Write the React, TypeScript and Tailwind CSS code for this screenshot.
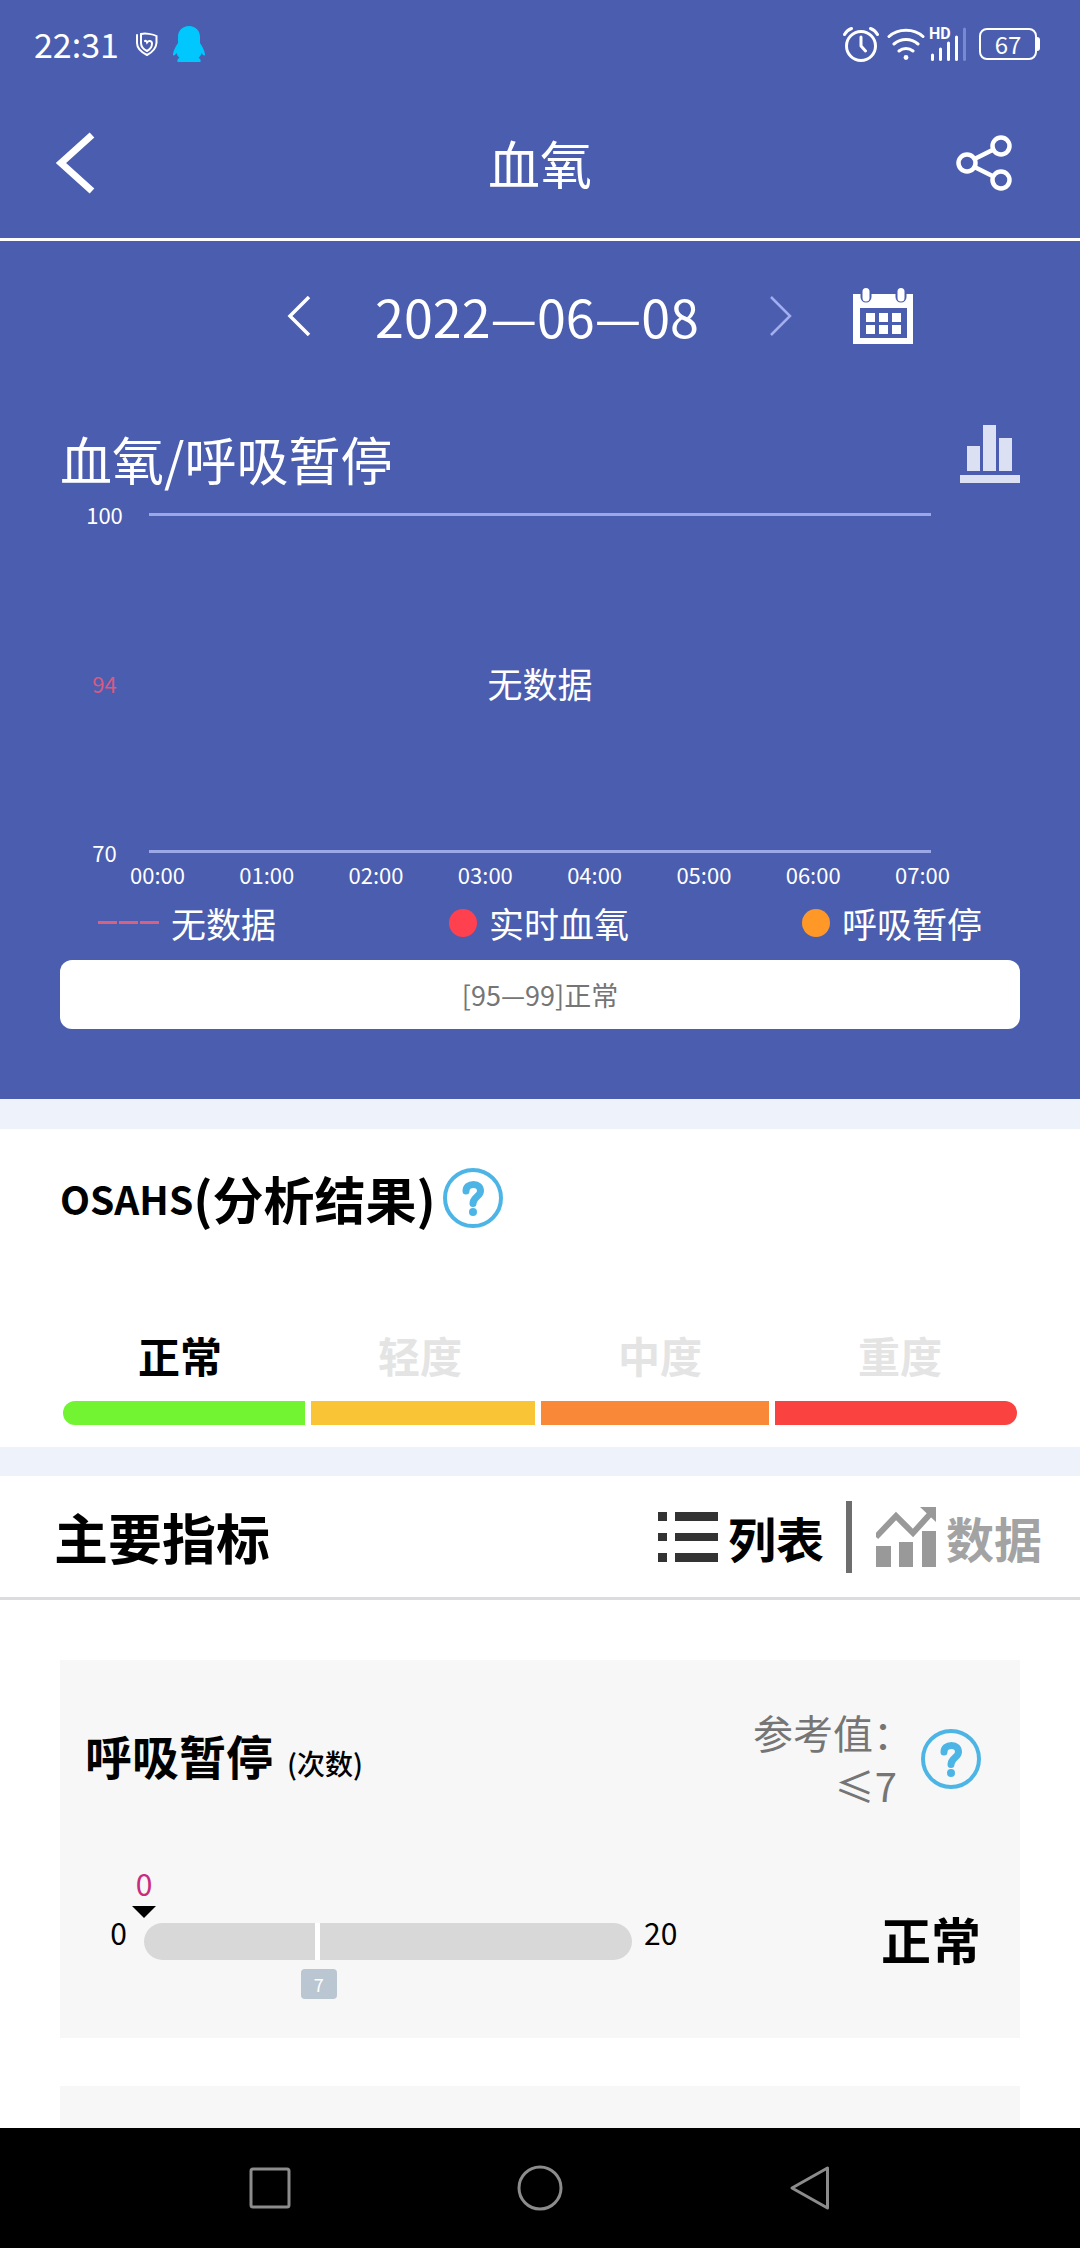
import type { ReactNode } from 'react';

const HOURS = ['00:00', '01:00', '02:00', '03:00', '04:00', '05:00', '06:00', '07:00'];

const LEVELS = [
  { label: '正常', active: true },
  { label: '轻度', active: false },
  { label: '中度', active: false },
  { label: '重度', active: false },
];

const APNEA = { value: 0, min: 0, max: 20, limit: 7 };

function percent(n: number) {
  return `${((n - APNEA.min) / (APNEA.max - APNEA.min)) * 100}%`;
}

function HelpButton({ label }: { label: string }) {
  return (
    <button aria-label={label} className="shrink-0">
      <svg viewBox="0 0 60 60" className="w-[60px] h-[60px]" fill="none" stroke="#4db5e5" strokeLinecap="round">
        <circle cx="30" cy="30" r="28" strokeWidth="4" />
        <path d="M23 23c0-4 3-6.500 7.500-6.500s7 2.500 7 6.500c0 5.500-7.500 6-7.500 12.500" strokeWidth="7" />
        <circle cx="30" cy="44" r="4" fill="#4db5e5" stroke="none" />
      </svg>
    </button>
  );
}

function StatusBar() {
  return (
    <div className="flex items-center justify-between h-[88px] pl-[34px] pr-10">
      <div className="flex items-center">
        <span className="text-[34px] leading-[40px]">22:31</span>
        <svg viewBox="0 0 24 24" className="w-6 h-6 ml-4" fill="none" stroke="white" strokeWidth="2" strokeLinecap="round">
          <path d="M2 3v8c0 5 4 9 10 12 6-3 9-7 9.500-12V4C18 2 10 1 6 2v9c0 4 3 6.500 6 8 3-1.500 5-4 5-7.500 0-3-3.500-3.500-5-1-1-2.500-2-1.500-2-1.500" />
        </svg>
        <svg viewBox="0 0 32 36" className="w-8 h-9 ml-[14px]" fill="#00c8ff">
          <path d="M16 0C9 0 5 5 5 11v6c-2 3-5 8-5 12 1 1.500 2.500-.5 3.500-2 .5 2 1.500 3.500 3 5-1.500.5-2.500 1.500-2 4h23c.5-2.500-.5-3.500-2-4 1.500-1.500 2.500-3 3-5 1 1.500 2.500 3.500 3.500 2 0-4-3-9-5-12v-6c0-6-4-11-11-11z" />
        </svg>
      </div>
      <div className="flex items-center">
        <svg viewBox="0 0 36 36" className="w-9 h-9" fill="none" stroke="white" strokeWidth="3" strokeLinecap="round" strokeLinejoin="round">
          <circle cx="18" cy="20" r="14.500" />
          <path d="M18 11v9l4.500 5M1.500 8.500Q4 4 8.500 2.500M34.500 8.500Q32 4 27.500 2.500" />
        </svg>
        <svg viewBox="0 0 38 36" className="w-[38px] h-9 ml-2" fill="none" stroke="white" strokeWidth="3" strokeLinecap="round">
          <path d="M2 10.500C11 2 27 2 36 10.500M7 18c7-6 17-6 24 0M12 25c4-3.500 10-3.500 14 0" />
          <circle cx="19" cy="31.500" r="2.400" fill="white" stroke="none" />
        </svg>
        <div className="relative ml-1">
          <svg viewBox="0 0 38 36" className="w-[38px] h-9" fill="none" stroke="white" strokeWidth="3" strokeLinecap="round">
            <path d="M3.500 29v4.500M11.500 23v10.500M19.500 17v16.500M27.500 11v22.500" />
            <path d="M35.500 3v30.500" stroke="#7789d3" />
          </svg>
          <span className="absolute left-0 top-0 font-['Roboto',sans-serif] font-bold text-base leading-4">HD</span>
        </div>
        <div className="flex items-center ml-3">
          <div className="flex items-center justify-center w-[58px] h-8 rounded-lg border-2 border-white text-2xl leading-7">
            67
          </div>
          <div className="w-[3px] h-[14px] rounded-r-sm bg-white" />
        </div>
      </div>
    </div>
  );
}

function TopBar() {
  return (
    <header className="flex items-center h-[153px] pl-[54px] pr-[68px] border-b-[3px] border-white">
      <div className="flex-1">
        <button aria-label="返回" className="block">
          <svg viewBox="0 0 42 62" className="w-[42px] h-[62px]" fill="none" stroke="white" strokeWidth="7">
            <path d="M38 3L7 31l31 28" />
          </svg>
        </button>
      </div>
      <h1 className="text-[52px] leading-[60px] pl-[14px]">血氧</h1>
      <div className="flex-1 flex justify-end">
        <button aria-label="分享">
          <svg viewBox="0 0 56 56" className="w-14 h-14" fill="none" stroke="white" strokeWidth="4.500">
            <circle cx="11" cy="28" r="8.500" />
            <circle cx="45" cy="11" r="8.500" />
            <circle cx="45" cy="45" r="8.500" />
            <path d="M18.500 24L37.500 14.500M18.500 32L37.500 41.500" />
          </svg>
        </button>
      </div>
    </header>
  );
}

function DateBar() {
  return (
    <div className="flex items-center h-[150px]">
      <div className="flex-1 flex justify-end pr-16">
        <button aria-label="前一天">
          <svg viewBox="0 0 24 40" className="w-6 h-10" fill="none" stroke="white" strokeWidth="3.500">
            <path d="M22 1L3 20l19 19" />
          </svg>
        </button>
      </div>
      <time dateTime="2022-06-08" className="text-[52px] leading-[52px]">2022—06—08</time>
      <div className="flex-1 flex items-center pl-[70px] gap-[60px]">
        <button aria-label="后一天">
          <svg viewBox="0 0 24 40" className="w-6 h-10" fill="none" stroke="#a3aef0" strokeWidth="2.500">
            <path d="M2 1l19 19L2 39" />
          </svg>
        </button>
        <button aria-label="选择日期">
          <svg viewBox="0 0 60 56" className="w-[60px] h-14">
            <path fill="white" d="M0 6h60v50H0z" />
            <path fill="#4a5dae" d="M7 20h47v30H7z" />
            <path fill="none" stroke="#4a5dae" strokeWidth="11" strokeLinecap="round" d="M13 3v6M48 3v6" />
            <path fill="none" stroke="white" strokeWidth="7" strokeLinecap="round" d="M13 3.500v6.500M48 3.500v6.500" />
            <path fill="white" d="M13 25h9v9h-9zM26 25h9v9h-9zM39 25h9v9h-9zM13 37h9v9h-9zM26 37h9v9h-9zM39 37h9v9h-9z" />
          </svg>
        </button>
      </div>
    </div>
  );
}

function LegendItem({ mark, label }: { mark: ReactNode; label: string }) {
  return (
    <li className="flex items-center gap-3 text-[35px] leading-[44px]">
      {mark}
      {label}
    </li>
  );
}

function OxygenChart() {
  return (
    <section className="px-[60px] pb-[70px]">
      <div className="flex items-start justify-between h-[112px] pt-[34px]">
        <h2 className="text-[52px] leading-[68px]">血氧/呼吸暂停</h2>
        <button aria-label="统计图">
          <svg viewBox="0 0 60 58" className="w-[60px] h-[58px]" fill="#dce0f3">
            <path d="M7 21h13v25H7zM23 0h13v46H23zM39 13h13v33H39zM0 50h60v8H0z" />
          </svg>
        </button>
      </div>

      {/* Plot */}
      <div className="flex h-[360px]">
        <div className="flex flex-col justify-between items-center w-[89px] text-[22px] leading-[22px]">
          <span>100</span>
          <span className="text-[#d75a84]">94</span>
          <span>70</span>
        </div>
        <div className="flex-1 flex items-center justify-center my-[10px] mr-[89px] border-y-[3px] border-[#9ba7e6]">
          <span className="text-[35px] leading-[44px]">无数据</span>
        </div>
      </div>
      <div className="flex justify-between mx-[70px] text-[22px] leading-[22px]">
        {HOURS.map((hour) => (
          <span key={hour}>{hour}</span>
        ))}
      </div>

      {/* Legend */}
      <ul className="flex items-center justify-between h-[75px] px-[38px]">
        <LegendItem
          label="无数据"
          mark={
            <span className="flex gap-[2px]">
              <i className="w-[19px] h-[3px] bg-[#d9607f]" />
              <i className="w-[19px] h-[3px] bg-[#d9607f]" />
              <i className="w-[19px] h-[3px] bg-[#d9607f]" />
            </span>
          }
        />
        <LegendItem label="实时血氧" mark={<i className="w-7 h-7 rounded-full bg-[#ff414f]" />} />
        <LegendItem label="呼吸暂停" mark={<i className="w-7 h-7 rounded-full bg-[#ff9827]" />} />
      </ul>

      <p className="flex items-center justify-center h-[69px] rounded-xl bg-white text-[#757575] text-[27px] leading-[32px]">
        [95—99]正常
      </p>
    </section>
  );
}

function Osahs() {
  return (
    <section className="h-[318px] px-[60px] pt-[39px] bg-white">
      <div className="flex items-center gap-[7px]">
        <h2 className="flex items-center font-bold text-[51px] leading-[56px]">
          <span className="text-[39px]">OSAHS</span>
          (分析结果)
        </h2>
        <HelpButton label="OSAHS 说明" />
      </div>
      <div className="grid grid-cols-4 mt-[103px] text-center font-bold text-[42px] leading-[48px]">
        {LEVELS.map(({ label, active }) => (
          <span key={label} className={active ? 'text-black' : 'text-[#e4e4e4]'}>
            {label}
          </span>
        ))}
      </div>
      <div className="flex gap-[6px] h-6 mt-[22px] mx-[3px]">
        <div className="flex-[242] rounded-l-full bg-[#72f432]" />
        <div className="flex-[224] bg-[#f9c536]" />
        <div className="flex-[228] bg-[#fa8839]" />
        <div className="flex-[242] rounded-r-full bg-[#fa4340]" />
      </div>
    </section>
  );
}

function IndicatorTabs() {
  return (
    <div className="flex items-center justify-between h-[124px] pl-[54px] pr-[38px] bg-white border-b-[3px] border-[#dcdcde] font-bold">
      <h2 className="text-[54px] leading-[64px]">主要指标</h2>
      <div className="flex items-center text-5xl leading-[60px]">
        <button className="flex items-center gap-[10px]">
          <svg viewBox="0 0 60 50" className="w-[60px] h-[50px]" fill="#333">
            <path d="M0 0h9v9H0zM17 0h43v9H17zM0 21h9v8H0zM17 21h43v8H17zM0 41h9v9H0zM17 41h43v9H17z" />
          </svg>
          列表
        </button>
        <div className="w-[6px] h-[72px] ml-[22px] mr-6 bg-[#6e6e6e]" />
        <button className="flex items-center gap-[10px] text-[#a3a3a3]">
          <svg viewBox="0 0 60 60" className="w-[60px] h-[60px]" fill="#999">
            <path d="M0 39h15v21H0zM23 35h14v25H23zM46 24h14v36H46zM44 0h16v15z" />
            <path d="M0 30L20 9l17 17L55 6" fill="none" stroke="#999" strokeWidth="6" />
          </svg>
          数据
        </button>
      </div>
    </div>
  );
}

function ApneaCard() {
  return (
    <article className="h-[378px] pl-[25px] pr-[39px] pt-[46px] bg-[#f7f7f7]">
      <div className="flex items-center justify-between">
        <h3 className="flex items-baseline gap-[14px] text-[47px] leading-[60px] font-bold">
          呼吸暂停
          <small className="text-[28px] font-medium">(次数)</small>
        </h3>
        <div className="flex items-center gap-2">
          <p className="flex flex-col items-end text-[40px] leading-[53px] text-[#757575]">
            <span>参考值：</span>
            <span className="pr-4">≤7</span>
          </p>
          <HelpButton label="呼吸暂停说明" />
        </div>
      </div>

      <div className="flex items-start justify-between mt-[52px] text-[30px] leading-9">
        <div className="flex">
          <span className="w-[59px] pt-[50px] pr-[17px] text-right">{APNEA.min}</span>
          <div className="w-[488px]">
            {/* Current value marker */}
            <div className="relative h-[59px]">
              <div
                className="absolute bottom-[5px] flex flex-col items-center w-12 -ml-6"
                style={{ left: percent(APNEA.value) }}
              >
                <span className="text-[#c92c7d]">{APNEA.value}</span>
                <svg viewBox="0 0 24 12" className="w-6 h-3 mt-[5px]">
                  <path d="M0 0h24L12 12z" />
                </svg>
              </div>
            </div>
            <div className="relative h-[37px] rounded-full bg-[#d8d8d8]">
              <div className="absolute inset-y-0 w-[5px] bg-white" style={{ left: percent(APNEA.limit) }} />
              <span
                className="absolute top-[46px] flex items-center justify-center w-9 h-[30px] -ml-[14px] rounded bg-[#bac6d1] text-lg leading-6 text-white"
                style={{ left: percent(APNEA.limit) }}
              >
                {APNEA.limit}
              </span>
            </div>
          </div>
          <span className="pt-[50px] pl-3">{APNEA.max}</span>
        </div>
        <strong className="pt-11 text-[50px] leading-[60px] font-bold">正常</strong>
      </div>
    </article>
  );
}

function NavBar() {
  return (
    <nav className="grid grid-cols-3 justify-items-center items-center h-[120px] px-[135px] bg-black">
      <button aria-label="最近任务">
        <svg viewBox="0 0 48 48" className="w-12 h-12" fill="none" stroke="#8c8c8c" strokeWidth="3">
          <rect x="5" y="5" width="38" height="38" rx="2" />
        </svg>
      </button>
      <button aria-label="主页">
        <svg viewBox="0 0 48 48" className="w-12 h-12" fill="none" stroke="#8c8c8c" strokeWidth="3">
          <circle cx="24" cy="24" r="21" />
        </svg>
      </button>
      <button aria-label="后退">
        <svg viewBox="0 0 48 48" className="w-12 h-12" fill="none" stroke="#8c8c8c" strokeWidth="3" strokeLinejoin="round">
          <path d="M6 24L41.500 4v40z" />
        </svg>
      </button>
    </nav>
  );
}

export default function App() {
  return (
    <div className="flex flex-col min-h-screen bg-white text-black font-['Noto_Sans_CJK_SC',sans-serif]">
      <div className="bg-[#4a5dae] text-white">
        <StatusBar />
        <TopBar />
        <DateBar />
        <OxygenChart />
      </div>
      <div className="h-[30px] bg-[#eef2fb]" />
      <Osahs />
      <div className="h-[29px] bg-[#eef2fb]" />
      <IndicatorTabs />
      <main className="flex-1 flex flex-col gap-12 px-[60px] pt-[60px]">
        <ApneaCard />
        <div className="flex-1 bg-[#f7f7f7]" />
      </main>
      <NavBar />
    </div>
  );
}
